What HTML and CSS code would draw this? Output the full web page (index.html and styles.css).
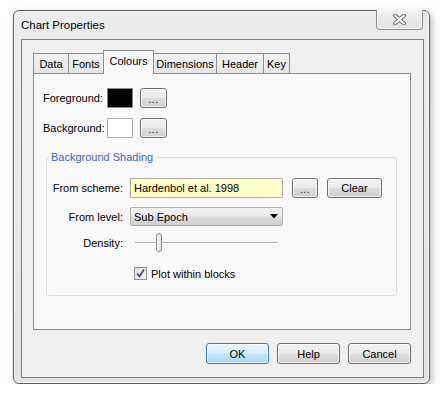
FILE: index.html
```html
<!DOCTYPE html>
<html lang="en">
<head>
    <meta charset="UTF-8">
    <title>Chart Properties</title>
    <link rel="stylesheet" href="styles.css">
</head>
<body>

    <div class="window">
        <div class="titlebar">
            <span class="title">Chart Properties</span>
            <div class="close-btn">
                <svg width="13" height="11" viewBox="0 0 13 11">
                    <path d="M2 1.5 L11 9.5 M11 1.5 L2 9.5" stroke="#6b6b6b" stroke-width="4" stroke-linecap="round"/>
                    <path d="M2 1.5 L11 9.5 M11 1.5 L2 9.5" stroke="#fff" stroke-width="2" stroke-linecap="round"/>
                </svg>
            </div>
        </div>

        <div class="client">
            <div class="tabs">
                <div class="tab tab-data">Data</div>
                <div class="tab tab-fonts">Fonts</div>
                <div class="tab tab-colours selected">Colours</div>
                <div class="tab tab-dimensions">Dimensions</div>
                <div class="tab tab-header">Header</div>
                <div class="tab tab-key">Key</div>
            </div>

            <div class="panel">
                <div class="colour-rows">
                    <span class="colour-label">Foreground:</span>
                    <div class="swatch swatch-black"></div>
                    <button class="btn btn-dots">...</button>
                    <span class="colour-label">Background:</span>
                    <div class="swatch swatch-white"></div>
                    <button class="btn btn-dots">...</button>
                </div>

                <fieldset class="group">
                    <legend>Background Shading</legend>

                    <div class="field-row row-scheme">
                        <span class="field-label">From scheme:</span>
                        <div class="text-input">Hardenbol et al. 1998</div>
                        <button class="btn btn-dots btn-pick">...</button>
                        <button class="btn btn-clear">Clear</button>
                    </div>

                    <div class="field-row row-level">
                        <span class="field-label">From level:</span>
                        <div class="dropdown">
                            <span>Sub Epoch</span>
                            <svg width="8" height="5" viewBox="0 0 8 5"><path d="M0 0 H8 L4 4.5 Z" fill="#000"/></svg>
                        </div>
                    </div>

                    <div class="field-row row-density">
                        <span class="field-label">Density:</span>
                        <div class="slider">
                            <div class="track"></div>
                            <div class="thumb"></div>
                        </div>
                    </div>

                    <div class="check-row">
                        <span class="checkbox">
                            <svg width="11" height="11" viewBox="0 0 11 11"><path d="M2 5.5 L4.5 8.5 L9 1.5" stroke="#3c4f8c" stroke-width="1.8" fill="none"/></svg>
                        </span>
                        <span>Plot within blocks</span>
                    </div>
                </fieldset>
            </div>

            <div class="dialog-buttons">
                <button class="btn btn-dialog btn-default">OK</button>
                <button class="btn btn-dialog">Help</button>
                <button class="btn btn-dialog">Cancel</button>
            </div>
        </div>
    </div>

</body>
</html>
```

FILE: styles.css
```css
body {
    margin: 0;
    padding: 0;
    background: #fff;
    font-family: 'Liberation Sans', Arial, sans-serif;
    font-size: 11px;
    color: #000;
}

.window {
    box-sizing: border-box;
    width: 417px;
    height: 374px;
    margin: 10px 0 0 13px;
    display: flex;
    flex-direction: column;
    border: 1px solid #5e5e5e;
    border-radius: 6px;
    background: linear-gradient(#ececec, #e3e3e3);
    box-shadow: inset 0 0 0 1px #f8f8f8, 2px 3px 7px rgba(0, 0, 0, 0.28);
}

.titlebar {
    height: 28px;
    display: flex;
    justify-content: space-between;
    align-items: flex-start;
}

.title {
    align-self: center;
    margin-left: 7px;
    font-size: 11.5px;
}

.close-btn {
    box-sizing: border-box;
    width: 47px;
    height: 20px;
    margin: -1px 6px 0 0;
    display: flex;
    align-items: center;
    justify-content: center;
    border: 1px solid #8c8c8c;
    border-top: none;
    border-radius: 0 0 4px 4px;
    background: linear-gradient(#f4f4f4, #e2e2e2);
    box-shadow: inset 0 0 0 1px #fbfbfb;
}

.client {
    flex: 1;
    margin: 0 5px 5px 7px;
    border: 1px solid #7c7c7c;
    background: #f0f0f0;
    display: flex;
    flex-direction: column;
}

/* tabs */

.tabs {
    display: flex;
    align-items: flex-end;
    height: 23px;
    margin-top: 10px;
    padding-left: 11px;
}

.tab {
    box-sizing: border-box;
    height: 20px;
    margin-left: -1px;
    display: flex;
    align-items: center;
    justify-content: center;
    border: 1px solid #898c95;
    border-bottom: none;
    background: linear-gradient(#f3f3f3, #e6e6e6);
}

.tab:first-child {
    margin-left: 0;
}

.tab.selected {
    position: relative;
    z-index: 1;
    height: 24px;
    margin-bottom: -1px;
    padding-bottom: 3px;
    background: #fafafa;
}

.tab-data { width: 36px; }
.tab-fonts { width: 36px; }
.tab-colours { width: 51px; }
.tab-dimensions { width: 64px; }
.tab-header { width: 48px; }
.tab-key { width: 27px; }

.panel {
    box-sizing: border-box;
    height: 257px;
    margin: 0 12px 0 11px;
    padding: 14px 0 0 9px;
    border: 1px solid #898c95;
    background: #f9f9f9;
}

/* colour pickers */

.colour-rows {
    display: grid;
    grid-template-columns: 57px 26px 27px;
    grid-auto-rows: 20px;
    column-gap: 7px;
    row-gap: 10px;
    align-items: center;
}

.swatch {
    box-sizing: border-box;
    height: 20px;
    border: 1px solid #8a8a8a;
}

.swatch-black {
    background: #000;
}

.swatch-white {
    background: #fff;
    border-color: #b5b5b5;
}

.btn {
    box-sizing: border-box;
    height: 20px;
    padding: 0;
    font-family: inherit;
    font-size: 11px;
    color: #000;
    border: 1px solid #707070;
    border-radius: 3px;
    background: linear-gradient(#f3f3f3 0%, #ebebeb 48%, #dddddd 52%, #cfcfcf 100%);
    box-shadow: inset 0 0 0 1px rgba(255, 255, 255, 0.7);
}

.btn-dots {
    width: 27px;
    font-size: 10px;
    letter-spacing: 0.5px;
    padding-top: 3px;
}

/* group box */

.group {
    box-sizing: border-box;
    width: 351px;
    min-width: 0;
    margin: 12px 0 0 3px;
    padding: 14px 0 15px 0;
    border: 1px solid #d5dfe5;
    border-radius: 3px;
    display: flex;
    flex-direction: column;
}

.group legend {
    margin-left: 2px;
    padding: 0 2px;
    line-height: 14px;
    color: #3a66c4;
}

.field-row {
    display: flex;
    align-items: center;
    height: 20px;
}

.row-level {
    height: 19px;
    margin-top: 9px;
}

.row-density {
    height: 19px;
    margin-top: 7px;
}

.field-label {
    width: 76px;
    margin-right: 7px;
    text-align: right;
}

.text-input {
    box-sizing: border-box;
    width: 153px;
    height: 20px;
    padding-left: 3px;
    display: flex;
    align-items: center;
    border: 1px solid #abadb3;
    background: #ffffc6;
}

.btn-pick {
    width: 26px;
    margin-left: 9px;
}

.btn-clear {
    width: 55px;
    margin-left: 9px;
}

.dropdown {
    box-sizing: border-box;
    width: 153px;
    height: 19px;
    padding: 0 4px 0 3px;
    display: flex;
    align-items: center;
    justify-content: space-between;
    border: 1px solid #acacac;
    border-radius: 2px;
    background: linear-gradient(#f2f2f2 0%, #ebebeb 48%, #dddddd 52%, #cfcfcf 100%);
}

.slider {
    position: relative;
    width: 153px;
    height: 19px;
    display: flex;
    align-items: center;
}

.track {
    flex: 1;
    margin: 0 5px;
    height: 1px;
    border-bottom: 1px solid #fff;
    background: #b0b0b0;
}

.thumb {
    position: absolute;
    left: 26px;
    top: 0;
    box-sizing: border-box;
    width: 6px;
    height: 19px;
    border: 1px solid #8a8a8a;
    border-radius: 3px;
    background: linear-gradient(90deg, #fafafa, #e0e0e0);
}

.check-row {
    display: flex;
    align-items: center;
    height: 13px;
    margin: 15px 0 0 87px;
}

.checkbox {
    box-sizing: border-box;
    width: 13px;
    height: 13px;
    margin-right: 4px;
    display: flex;
    align-items: center;
    justify-content: center;
    border: 1px solid #8f8f8f;
    background: linear-gradient(135deg, #dcdcdc, #fbfbfb);
}

/* dialog buttons */

.dialog-buttons {
    display: flex;
    justify-content: flex-end;
    gap: 8px;
    margin-top: 13px;
    padding-right: 12px;
}

.btn-dialog {
    width: 63px;
    height: 21px;
}

.btn-default {
    border-color: #3c7fb1;
    background: linear-gradient(#eaf6fd 0%, #d9f0fc 48%, #bee6fd 52%, #a7d9f5 100%);
}
```
